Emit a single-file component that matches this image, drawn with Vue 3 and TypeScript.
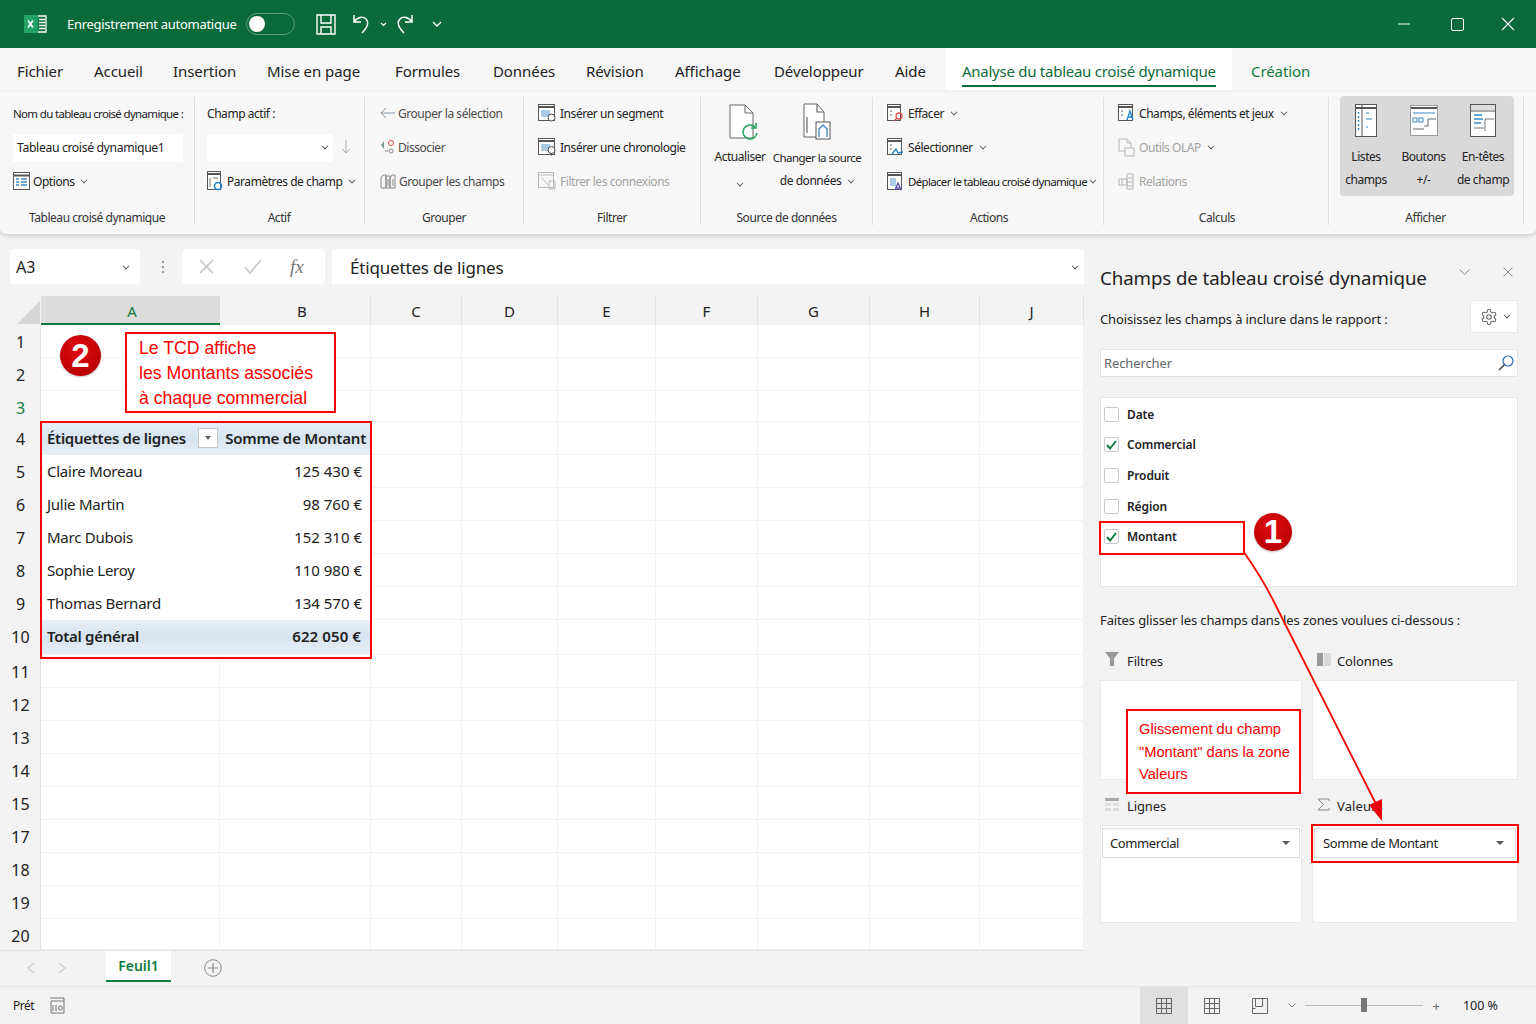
<script setup lang="ts">
interface Tab { label: string; w: number; kind?: string }
const tabs: Tab[] = [
  { label: 'Fichier', w: 77 }, { label: 'Accueil', w: 79 }, { label: 'Insertion', w: 94 },
  { label: 'Mise en page', w: 128 }, { label: 'Formules', w: 98 }, { label: 'Données', w: 93 },
  { label: 'Révision', w: 89 }, { label: 'Affichage', w: 99 }, { label: 'Développeur', w: 121 },
  { label: 'Aide', w: 67 }, { label: 'Analyse du tableau croisé dynamique', w: 286, kind: 'active' },
  { label: 'Création', w: 100, kind: 'green' }
]
const columns = [
  { n: 'A', w: 179 }, { n: 'B', w: 151 }, { n: 'C', w: 91 }, { n: 'D', w: 96 }, { n: 'E', w: 98 },
  { n: 'F', w: 102 }, { n: 'G', w: 112 }, { n: 'H', w: 110 }, { n: 'J', w: 104 }
]
interface Row { n: number; a?: string; b?: string; kind?: string }
const rows: Row[] = [
  { n: 1 }, { n: 2 }, { n: 3, kind: 'sel' },
  { n: 4, a: 'Étiquettes de lignes', b: 'Somme de Montant', kind: 'head' },
  { n: 5, a: 'Claire Moreau', b: '125 430 €', kind: 'data' }, { n: 6, a: 'Julie Martin', b: '98 760 €', kind: 'data' },
  { n: 7, a: 'Marc Dubois', b: '152 310 €', kind: 'data' }, { n: 8, a: 'Sophie Leroy', b: '110 980 €', kind: 'data' },
  { n: 9, a: 'Thomas Bernard', b: '134 570 €', kind: 'data' },
  { n: 10, a: 'Total général', b: '622 050 €', kind: 'total' },
  { n: 11 }, { n: 12 }, { n: 13 }, { n: 14 }, { n: 15 }, { n: 17 }, { n: 18 }, { n: 19 }, { n: 20 }
]
const fields = [
  { label: 'Date', on: false }, { label: 'Commercial', on: true }, { label: 'Produit', on: false },
  { label: 'Région', on: false }, { label: 'Montant', on: true }
]
</script>

<template>
  <div class="app">
    <header class="title">
      <svg class="logo" width="23" height="18" viewBox="0 0 23 18">
        <rect x="0" y="0" width="14" height="18" fill="#21a366" />
        <path d="M14 1h8v16h-8" fill="none" stroke="#fff" stroke-width="1.3" />
        <path d="M15 4.500h6M15 7.500h6M15 10.500h6M15 13.500h6" stroke="#fff" stroke-width="1.500" />
        <path d="M4 5.500l5 7M9 5.500l-5 7" stroke="#fff" stroke-width="1.700" />
      </svg>
      <span class="autosave">Enregistrement automatique</span>
      <span class="toggle"><i></i></span>
      <svg class="save" width="20" height="21" viewBox="0 0 20 21" fill="none" stroke="#fff" stroke-width="1.400">
        <path d="M1 1h18v19H1zM5 1v8h10V1M5 20v-7h10v7" />
      </svg>
      <svg class="undo" width="19" height="22" viewBox="0 0 19 22" fill="none" stroke="#fff" stroke-width="1.500">
        <path d="M2 2v7h7M2 9c3-5 9-6 12-3s2 8-4 14" />
      </svg>
      <svg class="small-caret" width="7" height="5" viewBox="0 0 7 5" fill="none" stroke="#fff" stroke-width="1.200"><path d="M1 1l2.500 2.500L6 1" /></svg>
      <svg class="redo" width="19" height="22" viewBox="0 0 19 22" fill="none" stroke="#fff" stroke-width="1.500">
        <path d="M17 2v7h-7M17 9c-3-5-9-6-12-3s-2 8 4 14" />
      </svg>
      <svg class="more" width="10" height="6" viewBox="0 0 10 6" fill="none" stroke="#fff" stroke-width="1.300"><path d="M1 1l4 4 4-4" /></svg>
      <span class="spacer"></span>
      <svg width="12" height="2" viewBox="0 0 12 2" class="win min"><path d="M0 1h12" stroke="#fff" /></svg>
      <svg width="13" height="13" viewBox="0 0 13 13" class="win max"><rect x="0.500" y="0.500" width="12" height="12" rx="1.500" fill="none" stroke="#fff" /></svg>
      <svg width="14" height="14" viewBox="0 0 14 14" class="win"><path d="M1 1l12 12M13 1L1 13" stroke="#fff" stroke-width="1.100" /></svg>
    </header>

    <nav class="tabs">
      <div v-for="t in tabs" :key="t.label" class="tab" :class="t.kind" :style="{ width: t.w + 'px' }">
        <span>{{ t.label }}</span>
      </div>
    </nav>

    <section class="ribbon">
      <div class="group g1">
        <div class="g-rows">
          <div class="r-item tight">Nom du tableau croisé dynamique :</div>
          <div class="r-item"><div class="name-input">Tableau croisé dynamique1</div></div>
          <div class="r-item">
            <svg class="ic" width="17" height="18" viewBox="0 0 17 18"><rect x=".5" y=".5" width="16" height="17" fill="#fff" stroke="#555" /><path d="M1 3.500h15" stroke="#555" stroke-width="2" /><path d="M3 7h3M8 7h6M3 10h3M8 10h6M3 13h3M8 13h6" stroke="#3c86c6" stroke-width="1.500" /></svg>
            <span>Options</span><i class="caret"></i>
          </div>
        </div>
        <div class="g-label">Tableau croisé dynamique</div>
      </div>

      <div class="group g2">
        <div class="g-rows">
          <div class="r-item">Champ actif :</div>
          <div class="r-item">
            <div class="combo"><i class="caret dark"></i></div>
            <svg class="down" width="10" height="14" viewBox="0 0 10 14" fill="none" stroke="#a8a8a8"><path d="M5 0v13M1 9l4 4 4-4" /></svg>
          </div>
          <div class="r-item">
            <svg class="ic" width="16" height="20" viewBox="0 0 16 20"><rect x=".5" y=".5" width="13" height="18" fill="#fff" stroke="#555" /><path d="M1 3h12" stroke="#555" stroke-width="2" /><path d="M3 7v9M6 7h5" stroke="#777" /><circle cx="11" cy="15" r="3.500" fill="none" stroke="#1e7fd0" stroke-width="1.500" /></svg>
            <span>Paramètres de champ</span><i class="caret"></i>
          </div>
        </div>
        <div class="g-label">Actif</div>
      </div>

      <div class="group g3">
        <div class="g-rows">
          <div class="r-item muted">
            <svg class="ic" width="15" height="12" viewBox="0 0 15 12" fill="none" stroke="#8a9aa8"><path d="M15 6H1M6 1L1 6l5 5" /></svg>
            <span>Grouper la sélection</span>
          </div>
          <div class="r-item dim">
            <svg class="ic" width="15" height="16" viewBox="0 0 15 16" fill="none"><path d="M4 2L1 6l3 4z" fill="#7a9a8a" /><circle cx="11" cy="4" r="2.500" stroke="#d9534f" /><circle cx="11" cy="12" r="2" stroke="#888" /><path d="M5 12h3" stroke="#888" /></svg>
            <span>Dissocier</span>
          </div>
          <div class="r-item dim">
            <svg class="ic" width="16" height="16" viewBox="0 0 16 16" fill="none" stroke="#888"><path d="M1 5l2-3h3v13H1zM6 3h4v12H6zM10 5l2-3h3v13h-5z" /><path d="M8 6v7M13 6v7" /></svg>
            <span>Grouper les champs</span>
          </div>
        </div>
        <div class="g-label">Grouper</div>
      </div>

      <div class="group g4">
        <div class="g-rows">
          <div class="r-item">
            <svg class="ic" width="18" height="18" viewBox="0 0 18 18"><rect x=".5" y=".5" width="16" height="16" fill="#fff" stroke="#555" /><path d="M1 3h15" stroke="#555" stroke-width="2" /><rect x="3" y="6" width="9" height="7" fill="#a9cbe6" /><circle cx="13.500" cy="13.500" r="3.500" fill="#fff" stroke="#444" /></svg>
            <span>Insérer un segment</span>
          </div>
          <div class="r-item">
            <svg class="ic" width="18" height="18" viewBox="0 0 18 18"><rect x=".5" y=".5" width="16" height="16" fill="#fff" stroke="#555" /><path d="M1 3h15" stroke="#555" stroke-width="2" /><rect x="3" y="6" width="9" height="7" fill="#a9cbe6" /><circle cx="13.500" cy="12" r="3.500" fill="#fff" stroke="#444" /><path d="M13.500 15.500v2" stroke="#444" /></svg>
            <span>Insérer une chronologie</span>
          </div>
          <div class="r-item disabled">
            <svg class="ic" width="18" height="18" viewBox="0 0 18 18" fill="none" stroke="#b8b8b8"><rect x=".5" y=".5" width="15" height="15" /><path d="M1 3h14M4 6l6 7M11 9h6v8h-6z" /></svg>
            <span>Filtrer les connexions</span>
          </div>
        </div>
        <div class="g-label">Filtrer</div>
      </div>

      <div class="group g5">
        <div class="g-rows big-row">
          <div class="big b-refresh">
            <svg width="32" height="38" viewBox="0 0 32 38" fill="none"><path d="M2 1h15l8 8v25H2z" fill="#fff" stroke="#666" /><path d="M17 1v8h8" stroke="#666" /><path d="M27 23a7 7 0 1 0 2 6" stroke="#22a25a" stroke-width="1.500" /><path d="M28 19v5h-5" stroke="#22a25a" stroke-width="1.500" /></svg>
            <span class="big-a">Actualiser</span>
            <i class="caret big-c"></i>
          </div>
          <div class="big b-source">
            <svg width="30" height="38" viewBox="0 0 30 38" fill="none"><path d="M2 1h13l7 8v25H2z" fill="#fff" stroke="#666" /><path d="M15 1v8h7M5 14v16" stroke="#666" stroke-width="1.200" /><rect x="14" y="19" width="14" height="17" fill="#fff" stroke="#555" /><path d="M17 34v-8l4-4 4 4v8" stroke="#3c86c6" stroke-width="1.300" /></svg>
            <span class="big-a small">Changer la source</span>
            <span class="big-b">de données<i class="caret"></i></span>
          </div>
        </div>
        <div class="g-label">Source de données</div>
      </div>

      <div class="group g6">
        <div class="g-rows">
          <div class="r-item">
            <svg class="ic" width="17" height="18" viewBox="0 0 17 18" fill="none"><rect x=".5" y=".5" width="13" height="16" fill="#fff" stroke="#555" /><path d="M1 3h12" stroke="#555" stroke-width="2" /><path d="M3 7h2M3 11h2" stroke="#666" /><circle cx="12" cy="12" r="3" stroke="#d9534f" stroke-width="1.300" /><path d="M10 14l-3 3" stroke="#d9534f" stroke-width="1.300" /></svg>
            <span>Effacer</span><i class="caret"></i>
          </div>
          <div class="r-item">
            <svg class="ic" width="17" height="18" viewBox="0 0 17 18" fill="none"><rect x=".5" y=".5" width="14" height="16" fill="#fff" stroke="#555" /><path d="M1 3h13" stroke="#555" stroke-width="2" /><path d="M3 7h2M3 11h2" stroke="#666" /><path d="M5 16l4-5 2 4 5-1" stroke="#1e7fd0" stroke-width="1.300" /></svg>
            <span>Sélectionner</span><i class="caret"></i>
          </div>
          <div class="r-item">
            <svg class="ic" width="17" height="19" viewBox="0 0 17 19" fill="none"><rect x=".5" y=".5" width="14" height="17" fill="#fff" stroke="#555" /><path d="M1 3h13" stroke="#555" stroke-width="2" /><rect x="3" y="6" width="6" height="8" fill="#a9cbe6" /><path d="M8 18l3-7 3 7M9 16h4" stroke="#5b4fb0" stroke-width="1.300" /></svg>
            <span class="narrow">Déplacer le tableau croisé dynamique</span><i class="caret tight-c"></i>
          </div>
        </div>
        <div class="g-label">Actions</div>
      </div>

      <div class="group g7">
        <div class="g-rows">
          <div class="r-item">
            <svg class="ic" width="17" height="18" viewBox="0 0 17 18" fill="none"><rect x=".5" y=".5" width="14" height="16" fill="#fff" stroke="#555" /><path d="M1 3h13" stroke="#555" stroke-width="2" /><path d="M3 7h2M3 11h2" stroke="#666" /><path d="M9 16l3-9 3 9M10 13h4" stroke="#1e7fd0" stroke-width="1.300" /></svg>
            <span>Champs, éléments et jeux</span><i class="caret"></i>
          </div>
          <div class="r-item disabled">
            <svg class="ic" width="17" height="19" viewBox="0 0 17 19" fill="none" stroke="#b5b5b5"><path d="M1 1h8l4 4v8H1zM9 1v4h4" /><rect x="7" y="10" width="9" height="8" fill="#f6f6f6" /></svg>
            <span>Outils OLAP</span><i class="caret"></i>
          </div>
          <div class="r-item disabled">
            <svg class="ic" width="17" height="17" viewBox="0 0 17 17" fill="none" stroke="#b5b5b5"><path d="M9 1h6v15H9zM1 6h8v6H1zM9 5h6M9 9h6M9 13h6M4 6v6" /></svg>
            <span>Relations</span>
          </div>
        </div>
        <div class="g-label">Calculs</div>
      </div>

      <div class="group g8">
        <div class="show-row">
          <div class="show s1">
            <svg width="22" height="34" viewBox="0 0 22 34" fill="none"><rect x=".5" y=".5" width="21" height="32" fill="#fff" stroke="#555" /><path d="M1 4h20" stroke="#555" stroke-width="2" /><path d="M7 1v32" stroke="#555" /><path d="M3.500 8v20" stroke="#3c86c6" stroke-width="1.500" stroke-dasharray="2 2" /><path d="M11 9h3M11 15h6M11 23h2" stroke="#3c86c6" /></svg>
            <span>Listes</span><span>champs</span>
          </div>
          <div class="show">
            <svg width="28" height="32" viewBox="0 0 28 32" fill="none"><rect x=".5" y=".5" width="27" height="30" fill="#fff" stroke="#999" /><path d="M1 3h26" stroke="#555" stroke-width="2" /><path d="M3 8h22" stroke="#3c86c6" /><rect x="3" y="13" width="4" height="4" stroke="#3c86c6" /><rect x="9" y="13" width="4" height="4" stroke="#3c86c6" /><path d="M14 21h4v-7h8M3 24h11" stroke="#666" /></svg>
            <span>Boutons</span><span>+/-</span>
          </div>
          <div class="show s3">
            <svg width="26" height="34" viewBox="0 0 26 34" fill="none"><rect x=".5" y=".5" width="25" height="32" fill="#fff" stroke="#555" /><rect x="1" y="1" width="24" height="5" fill="#ddd" /><path d="M1 7h24" stroke="#555" /><path d="M4 11h8M4 15h9M4 19h7" stroke="#3c86c6" stroke-width="1.300" /><path d="M15 27v-12h9M4 24h10" stroke="#777" /></svg>
            <span>En-têtes</span><span>de champ</span>
          </div>
        </div>
        <div class="g-label">Afficher</div>
      </div>
    </section>

    <main class="main">
      <div class="left">
        <div class="fbar">
          <div class="namebox"><span>A3</span><i class="caret dark"></i></div>
          <div class="dots"><b></b><b></b><b></b></div>
          <div class="fbtns">
            <svg width="15" height="15" viewBox="0 0 15 15" fill="none" stroke="#c4c4c4" stroke-width="1.700"><path d="M1 1l13 13M14 1L1 14" /></svg>
            <svg width="18" height="15" viewBox="0 0 18 15" fill="none" stroke="#cdcdcd" stroke-width="1.900"><path d="M1 8l5 6L17 1" /></svg>
            <span class="fx">fx</span>
          </div>
          <div class="finput"><span>Étiquettes de lignes</span><i class="caret dark"></i></div>
        </div>

        <div class="sheet">
          <div class="col-head">
            <div class="corner"><span class="tri"></span></div>
            <div v-for="c in columns" :key="c.n" class="col" :class="['col-' + c.n, { sel: c.n === 'A' }]" :style="{ width: c.w + 'px' }">{{ c.n }}</div>
          </div>
          <div v-for="r in rows" :key="r.n" class="row" :class="r.kind">
            <div class="row-n">{{ r.n }}</div>
            <div v-for="(c, i) in columns" :key="c.n" class="cell" :class="{ ca: i === 0, cb: i === 1 }" :style="{ width: c.w + 'px' }">
              <template v-if="i === 0 && r.a">
                <span>{{ r.a }}</span>
                <span v-if="r.kind === 'head'" class="filter"><i></i></span>
              </template>
              <template v-else-if="i === 1 && r.b">{{ r.b }}</template>
            </div>
          </div>
        </div>

        <div class="sheet-tabs">
          <svg class="nav-a" width="8" height="12" viewBox="0 0 8 12" fill="none" stroke="#cfcfcf" stroke-width="1.200"><path d="M7 1L1 6l6 5" /></svg>
          <svg class="nav-b" width="8" height="12" viewBox="0 0 8 12" fill="none" stroke="#cfcfcf" stroke-width="1.200"><path d="M1 1l6 5-6 5" /></svg>
          <div class="s-tab">Feuil1</div>
          <svg class="add" width="18" height="18" viewBox="0 0 18 18" fill="none" stroke="#8a8a8a"><circle cx="9" cy="9" r="8.300" /><path d="M9 4v10M4 9h10" stroke-width="1.200" /></svg>
        </div>
      </div>

      <aside class="panel">
        <div class="p-head">
          <h2>Champs de tableau croisé dynamique</h2>
          <svg class="p-chev" width="11" height="7" viewBox="0 0 11 7" fill="none" stroke="#8a8a8a"><path d="M.5.500l5 5 5-5" /></svg>
          <svg class="p-close" width="10" height="10" viewBox="0 0 10 10" fill="none" stroke="#8a8a8a"><path d="M.5.500l9 9M9.500.500l-9 9" /></svg>
        </div>
        <div class="p-sub">
          <span>Choisissez les champs à inclure dans le rapport :</span>
          <div class="gear">
            <svg width="18" height="18" viewBox="0 0 24 24" fill="none" stroke="#666" stroke-width="1.400"><circle cx="12" cy="12" r="3" /><path d="M12.220 2h-.44a2 2 0 0 0-2 2v.18a2 2 0 0 1-1 1.730l-.43.25a2 2 0 0 1-2 0l-.15-.08a2 2 0 0 0-2.730.73l-.22.38a2 2 0 0 0 .73 2.730l.15.1a2 2 0 0 1 1 1.720v.51a2 2 0 0 1-1 1.740l-.15.09a2 2 0 0 0-.73 2.730l.22.38a2 2 0 0 0 2.730.73l.15-.08a2 2 0 0 1 2 0l.43.25a2 2 0 0 1 1 1.730V20a2 2 0 0 0 2 2h.44a2 2 0 0 0 2-2v-.18a2 2 0 0 1 1-1.730l.43-.25a2 2 0 0 1 2 0l.15.08a2 2 0 0 0 2.730-.73l.22-.39a2 2 0 0 0-.73-2.730l-.15-.08a2 2 0 0 1-1-1.740v-.5a2 2 0 0 1 1-1.740l.15-.09a2 2 0 0 0 .73-2.730l-.22-.38a2 2 0 0 0-2.730-.73l-.15.08a2 2 0 0 1-2 0l-.43-.25a2 2 0 0 1-1-1.730V4a2 2 0 0 0-2-2z" /></svg>
            <i class="caret dark"></i>
          </div>
        </div>
        <div class="search">
          <span>Rechercher</span>
          <svg width="16" height="16" viewBox="0 0 16 16" fill="none" stroke="#2b6cb0" stroke-width="1.200"><circle cx="10" cy="6" r="5" /><path d="M6.500 9.500L1 15" stroke="#333" /></svg>
        </div>
        <div class="fields">
          <div v-for="f in fields" :key="f.label" class="field">
            <span class="check">
              <svg v-if="f.on" width="11" height="10" viewBox="0 0 11 10" fill="none" stroke="#107c41" stroke-width="2"><path d="M1 5l3 3.500L10 1" /></svg>
            </span>
            <span>{{ f.label }}</span>
          </div>
        </div>
        <p class="drag">Faites glisser les champs dans les zones voulues ci-dessous :</p>
        <div class="areas">
          <div class="area">
            <div class="a-label">
              <svg width="14" height="14" viewBox="0 0 14 14"><path d="M0 0h14L9 6.500V14H5V6.500z" fill="#999" /></svg>
              <span>Filtres</span>
            </div>
            <div class="zone"></div>
          </div>
          <div class="area">
            <div class="a-label">
              <svg width="14" height="13" viewBox="0 0 14 13"><rect width="6" height="13" fill="#999" /><rect x="7" width="7" height="13" fill="#d8d8d8" /></svg>
              <span>Colonnes</span>
            </div>
            <div class="zone"></div>
          </div>
          <div class="area low">
            <div class="a-label">
              <svg width="14" height="13" viewBox="0 0 14 13"><rect width="14" height="3" fill="#aaa" /><path d="M0 5h6v3H0zM8 5h6v3H8zM0 10h6v3H0zM8 10h6v3H8z" fill="#ddd" /></svg>
              <span>Lignes</span>
            </div>
            <div class="zone short"><div class="chip"><span>Commercial</span><i class="tri-d"></i></div></div>
          </div>
          <div class="area low">
            <div class="a-label">
              <svg width="13" height="13" viewBox="0 0 13 13" fill="none" stroke="#888"><path d="M12 3V1H1l5.500 5.500L1 12h11v-2" /></svg>
              <span class="val">Valeurs</span>
            </div>
            <div class="zone short"><div class="chip c2"><span>Somme de Montant</span><i class="tri-d"></i></div></div>
          </div>
        </div>
      </aside>
    </main>

    <footer class="status">
      <span class="ready">Prét</span>
      <svg class="macro" width="17" height="17" viewBox="0 0 17 17" fill="none" stroke="#777"><path d="M1 1h14v15H2V4h13" /><path d="M4 8v6M7 8v6" /><circle cx="11.500" cy="11" r="2" /></svg>
      <span class="spacer"></span>
      <div class="view on"><svg width="16" height="16" viewBox="0 0 16 16" fill="none" stroke="#666"><path d="M.5.500h15v15H.5zM.5 5.500h15M.5 10.500h15M5.500.500v15M10.500.500v15" /></svg></div>
      <div class="view"><svg width="16" height="16" viewBox="0 0 16 16" fill="none" stroke="#666"><path d="M.5.500h15v15H.5zM.5 5.500h15M.5 10.500h15M5.500.500v15M10.500.500v15" /></svg></div>
      <div class="view"><svg width="16" height="16" viewBox="0 0 16 16" fill="none" stroke="#666"><path d="M.5.500h15v15H.5zM3.500.500v8h7v-8M.5 10.500h3" /></svg></div>
      <svg class="zoom-c" width="8" height="5" viewBox="0 0 8 5" fill="none" stroke="#777"><path d="M.5.500L4 4 7.500.500" /></svg>
      <div class="slider"><i></i></div>
      <span class="plus">+</span>
      <span class="pct">100 %</span>
    </footer>

    <!-- annotations over the window -->
    <svg class="arrow" width="1536" height="1024" viewBox="0 0 1536 1024" fill="none">
      <path d="M1244.500 553Q1262 578 1273 600L1377 806" stroke="#f00" stroke-width="1.800" />
      <path d="M1382 821L1369 805L1382 799Z" fill="#e8000b" />
    </svg>
    <div class="red-box b-pivot"></div>
    <div class="red-box b-montant"></div>
    <div class="red-box b-somme"></div>
    <div class="note n1">Le TCD affiche<br />les Montants associés<br />à chaque commercial</div>
    <div class="note n2">Glissement du champ<br />"Montant" dans la zone<br />Valeurs</div>
    <div class="badge b1">1</div>
    <div class="badge b2">2</div>
  </div>
</template>

<style scoped>
.app { position: relative; width: 1536px; height: 1024px; overflow: hidden; display: flex; flex-direction: column; background: #f3f3f3; color: #222; font-family: "Noto Sans", "Liberation Sans", sans-serif; }
.spacer { flex: 1; }
i { display: block; font-style: normal; }

.title { height: 48px; flex: none; background: #0a6a3a; display: flex; align-items: center; color: #fff; }
.logo { margin-left: 24px; }
.autosave { margin-left: 20px; width: 179px; font-size: 13px; white-space: nowrap; letter-spacing: -.28px; }
.toggle { width: 49px; height: 22px; box-sizing: border-box; border: 1px solid #5f9c7d; border-radius: 11px; position: relative; }
.toggle i { position: absolute; left: 2px; top: 2px; width: 16px; height: 16px; background: #fff; border-radius: 50%; }
.save { margin-left: 21px; }
.undo { margin-left: 16px; }
.small-caret { margin-left: 9px; }
.redo { margin-left: 8px; }
.more { margin-left: 18px; }
.win { margin-right: 37px; }
.win.min { margin-right: 41px; }
.win:last-child { margin-right: 21px; }

.tabs { height: 44px; flex: none; display: flex; background: #f6f6f6; padding-left: 1px; }
.tab { box-sizing: border-box; padding-left: 16px; font-size: 15px; line-height: 46px; white-space: nowrap; letter-spacing: -.08px; }
.tab.active { background: #fff; height: 42px; color: #0e6b3c; }
.tab.active span { display: inline-block; height: 37px; line-height: 46px; width: 254px; border-bottom: 2px solid #0e6b3c; letter-spacing: -.26px; }
.tab.green { color: #107c41; padding-left: 19px; }

.ribbon { height: 142px; flex: none; display: flex; background: #f7f7f7; box-shadow: 0 2px 5px rgba(0, 0, 0, .16); border-radius: 0 0 6px 6px; position: relative; z-index: 2; font-size: 12px; letter-spacing: -.45px; }
.group { box-sizing: border-box; height: 128px; margin-top: 5px; border-right: 1px solid #dedede; display: flex; flex-direction: column; white-space: nowrap; }
.g-rows { height: 109px; margin-top: -1px; flex: none; }
.g-label { text-align: center; height: 20px; line-height: 26px; color: #333; }
.g1 { width: 195px; padding-left: 13px; }
.g1 .g-label { padding-right: 13px; }
.g2 { width: 170px; padding-left: 12px; }
.g2 .g-label { padding-right: 13px; }
.g3 { width: 159px; padding-left: 15px; }
.g4 { width: 177px; padding-left: 14px; }
.g5 { width: 172px; padding-left: 14px; }
.g6 { width: 231px; padding-left: 14px; }
.g7 { width: 225px; padding-left: 14px; }
.g8 { width: 195px; padding-left: 11px; border-right: 1px solid #dedede; }
.g3 .g-label { padding-right: 15px; }
.g4 .g-label { padding-right: 14px; }
.g5 .g-label { padding-right: 14px; }
.g6 .g-label { padding-right: 12px; }
.g7 .g-label { padding-right: 12px; }
.r-item { height: 34px; display: flex; align-items: center; }
.r-item .ic { margin-right: 4px; flex: none; }
.g1 .r-item .ic { margin-right: 3px; }
.g3 .r-item .ic { margin-right: 3px; }
.r-item.tight { letter-spacing: -.67px; font-size: 11.500px; }
.muted, .dim { color: #4a4a4a; }
.disabled { color: #a3a3a3; }
.narrow { letter-spacing: -.67px; font-size: 11.500px; }
.caret { width: 5px; height: 5px; margin-left: 7px; border-right: 1px solid #555; border-bottom: 1px solid #555; transform: rotate(45deg) scale(.8); margin-top: -3px; flex: none; }
.caret.dark { border-color: #444; }
.tight-c { margin-left: 3px; }
.name-input { width: 170px; height: 28px; background: #fff; box-sizing: border-box; padding-left: 4px; line-height: 28px; margin-top: 1px; font-size: 12.200px; letter-spacing: -.35px; }
.combo { width: 126px; height: 28px; background: #fff; display: flex; justify-content: flex-end; align-items: center; padding-right: 5px; box-sizing: border-box; margin-top: 1px; }
.down { margin-left: 8px; }
.big-row { display: flex; gap: 8px; }
.big { display: flex; flex-direction: column; align-items: center; position: relative; }
.b-refresh { width: 52px; margin-left: -1px; }
.b-source { width: 88px; margin-left: -1px; }
.b-refresh svg { margin-top: 8px; margin-left: 8px; }
.b-source svg { margin-top: 7px; }
.big-a { margin-top: 6px; line-height: 18px; }
.big-a.small { margin-top: 8px; font-size: 11.500px; letter-spacing: -.55px; }
.big-c { margin: 14px 0 0; }
.big-b { display: flex; align-items: center; margin-top: 5px; line-height: 18px; }
.show-row { display: flex; height: 109px; margin-top: -1px; flex: none; }
.show { width: 57px; height: 100px; background: #d9d9d9; display: flex; flex-direction: column; align-items: center; box-sizing: border-box; padding-top: 8px; line-height: 23px; }
.show svg { margin-bottom: 7px; height: 34px; flex: none; }
.s1 { border-radius: 4px 0 0 4px; width: 55px; padding-right: 3px; }
.s3 { border-radius: 0 4px 4px 0; width: 62px; }
.g8 .g-label { padding-right: 12px; padding-top: 0; }

.main { flex: 1; display: flex; min-height: 0; }
.left { width: 1084px; display: flex; flex-direction: column; }
.fbar { height: 35px; margin-top: 15px; display: flex; flex: none; align-items: stretch; padding-left: 10px; box-sizing: content-box; }
.namebox { width: 130px; background: #fff; border-radius: 4px; display: flex; align-items: center; justify-content: space-between; padding: 1px 11px 0 6px; box-sizing: border-box; font-size: 16px; }
.dots { width: 42px; display: flex; flex-direction: column; align-items: center; justify-content: center; gap: 3px; padding-left: 3px; box-sizing: border-box; }
.dots b { width: 2px; height: 2px; background: #999; }
.fbtns { width: 143px; background: #fff; border-radius: 4px; display: flex; align-items: center; padding-left: 17px; gap: 30px; box-sizing: border-box; }
.fx { font-family: "Liberation Serif", serif; font-style: italic; color: #777; font-size: 19px; margin-left: -2px; }
.finput { width: 752px; margin-left: 7px; background: #fff; border-radius: 4px 4px 0 0; display: flex; align-items: center; justify-content: space-between; padding: 1px 6px 0 18px; box-sizing: border-box; font-size: 17px; letter-spacing: -.17px; }

.sheet { margin-top: 12px; flex: none; }
.col-head { display: flex; height: 29px; }
.corner { width: 41px; position: relative; }
.tri { position: absolute; right: 1px; bottom: 1px; border-left: 23px solid transparent; border-bottom: 23px solid #d6d6d6; }
.col { box-sizing: border-box; text-align: center; font-size: 15px; line-height: 30px; border-right: 1px solid #e2e2e2; flex: none; }
.col.sel { background: #dcdcdc; color: #107c41; border-bottom: 2px solid #107c41; border-right: none; padding-left: 3px; }
.col-B { padding-left: 14px; }
.row { display: flex; height: 33px; box-sizing: border-box; }
.row.sel { height: 31px; }
.row.total { height: 35px; }
.row:last-child { height: 31px; }
.row-n { width: 41px; box-sizing: border-box; text-align: center; font-size: 16px; line-height: 35px; border-right: 1px solid #e2e2e2; flex: none; padding-left: 1px; }
.row.sel .row-n { color: #107c41; }
.cell { box-sizing: border-box; flex: none; background: #fff; border-right: 1px solid #f3f3f3; border-bottom: 1px solid #f3f3f3; font-size: 15px; line-height: 32px; white-space: nowrap; letter-spacing: -.25px; }
.cell.ca { padding-left: 6px; position: relative; }
.cell.cb { text-align: right; padding-right: 8px; letter-spacing: 0; }
.row.data .cell.ca, .row.data .cell.cb { border-color: #fff; }
.row.head .cell.ca, .row.head .cell.cb,
.row.total .cell.ca, .row.total .cell.cb { background: linear-gradient(#e8eff7, #d7e4f2 50%, #e8eff7); border: none; font-weight: 600; letter-spacing: -.28px; }
.row.total .cell.cb { letter-spacing: .1px; padding-right: 10px; }
.row.total .cell.ca, .row.total .cell.cb { height: 34px; line-height: 33px; }
.row.head .cell.cb { padding-right: 5px; letter-spacing: -.22px; }
.filter { position: absolute; left: 157px; top: 6px; width: 20px; height: 20px; background: #fff; border: 1px solid #c8c8c8; box-sizing: border-box; display: flex; align-items: center; justify-content: center; }
.filter i { border-left: 3px solid transparent; border-right: 3px solid transparent; border-top: 4px solid #666; }

.sheet-tabs { flex: none; height: 35px; display: flex; align-items: center; position: relative; z-index: 1; background: #f3f3f3; border-top: 1px solid #e2e2e2; box-sizing: border-box; }
.nav-a { margin-left: 27px; }
.nav-b { margin-left: 23px; }
.s-tab { margin-left: 40px; width: 65px; height: 31px; margin-bottom: 3px; background: #fff; color: #107c41; font-weight: 600; font-size: 14px; text-align: center; line-height: 29px; box-sizing: border-box; border-bottom: 2px solid #107c41; }
.add { margin-left: 33px; }

.panel { width: 452px; box-sizing: border-box; padding: 0 18px 0 16px; font-size: 13px; letter-spacing: -.12px; }
.p-head { display: flex; align-items: center; height: 28px; margin-top: 29px; }
.p-head h2 { margin: 0; font-size: 18.700px; font-weight: 400; width: 358px; white-space: nowrap; letter-spacing: -.1px; }
.p-chev { margin-top: -10px; margin-left: 1px; }
.p-close { margin-left: 33px; margin-top: -10px; }
.p-sub { display: flex; align-items: center; justify-content: space-between; margin-top: 11px; height: 34px; }
.gear { width: 48px; height: 33px; background: #fff; border: 1px solid #e8e8e8; box-sizing: border-box; display: flex; align-items: center; padding-left: 9px; align-self: flex-start; margin-top: -2px; }
.gear .caret { margin-left: 6px; }
.search { height: 28px; margin-top: 13px; background: #fff; border: 1px solid #e4e4e4; box-sizing: border-box; display: flex; align-items: center; justify-content: space-between; padding: 0 3px; color: #666; }
.fields { height: 190px; margin-top: 20px; background: #fff; border: 1px solid #e4e4e4; box-sizing: border-box; padding-top: 1px; }
.field { height: 30.600px; display: flex; align-items: center; font-weight: 600; padding-left: 3px; font-size: 12px; }
.check { width: 15px; height: 15px; box-sizing: border-box; border: 1px solid #c9c9c9; background: #fff; border-radius: 2px; margin-right: 8px; display: flex; align-items: center; justify-content: center; }
.drag { margin: 24px 0 0; height: 18px; line-height: 18px; white-space: nowrap; }
.areas { display: grid; grid-template-columns: 202px 206px; column-gap: 10px; margin-top: 22px; }
.area { display: flex; flex-direction: column; }
.a-label { height: 20px; display: flex; align-items: center; gap: 8px; padding-left: 5px; margin-bottom: 9px; }
.area:nth-child(even) .a-label { gap: 6px; }
.a-label svg { margin-top: -4px; }
.a-label .val { margin-left: 1px; letter-spacing: .1px; }
.zone { height: 100px; background: #fff; border: 1px solid #e8e8e8; box-sizing: border-box; }
.low { margin-top: 16px; }
.low .a-label { margin-bottom: 9px; }
.zone.short { height: 98px; padding: 2px 1px; }
.chip { height: 30px; background: #fff; border: 1px solid #dcdcdc; box-sizing: border-box; display: flex; align-items: center; justify-content: space-between; padding: 0 9px 0 7px; letter-spacing: -.4px; }
.chip.c2 { padding: 0 11px 0 8px; }
.tri-d { border-left: 4px solid transparent; border-right: 4px solid transparent; border-top: 4px solid #555; }

.status { height: 38px; flex: none; display: flex; align-items: center; border-top: 1px solid #e6e6e6; box-sizing: border-box; font-size: 12px; position: relative; z-index: 1; background: #f3f3f3; }
.ready { margin-left: 13px; letter-spacing: -.5px; }
.macro { margin-left: 15px; }
.view { width: 48px; height: 38px; display: flex; align-items: center; justify-content: center; }
.view.on { background: #e0e0e0; }
.zoom-c { margin-left: 4px; margin-top: -1px; }
.slider { width: 118px; height: 1px; background: #bdbdbd; margin-left: 9px; position: relative; }
.slider i { position: absolute; left: 56px; top: -7px; width: 6px; height: 14px; background: #777; }
.plus { margin-left: 9px; color: #666; font-size: 13px; }
.pct { margin-left: 23px; margin-right: 38px; font-size: 12.500px; }

.arrow { position: absolute; left: 0; top: 0; z-index: 5; pointer-events: none; }
.red-box { position: absolute; z-index: 5; border: 2px solid #f00; box-sizing: border-box; }
.b-pivot { left: 40px; top: 421px; width: 332px; height: 238px; }
.b-montant { left: 1099px; top: 521px; width: 146px; height: 34px; }
.b-somme { left: 1311px; top: 824px; width: 208px; height: 39px; }
.note { position: absolute; z-index: 6; background: #fff; border: 2px solid #f00; box-sizing: border-box; color: #f00; font-family: "Liberation Sans", Arial, sans-serif; white-space: nowrap; }
.n1 { left: 125px; top: 332px; width: 211px; height: 81px; padding: 2px 0 0 12px; font-size: 17.700px; line-height: 25px; }
.n2 { left: 1126px; top: 709px; width: 175px; height: 85px; padding: 7px 0 0 11px; font-size: 14.700px; line-height: 22.600px; }
.badge { position: absolute; z-index: 6; border-radius: 50%; background: radial-gradient(circle at 45% 35%, #e00d10, #c00006 65%, #a00004); color: #fff; text-align: center; font-family: "Liberation Sans", Arial, sans-serif; font-weight: 700; box-shadow: 0 1px 2px rgba(0, 0, 0, .25); }
.b1 { left: 1254px; top: 513px; width: 38px; height: 38px; font-size: 33px; line-height: 37px; }
.b2 { left: 60px; top: 335px; width: 41px; height: 41px; font-size: 33px; line-height: 41px; }
</style>

<style>
html, body { margin: 0; padding: 0; background: #f3f3f3; }
</style>
